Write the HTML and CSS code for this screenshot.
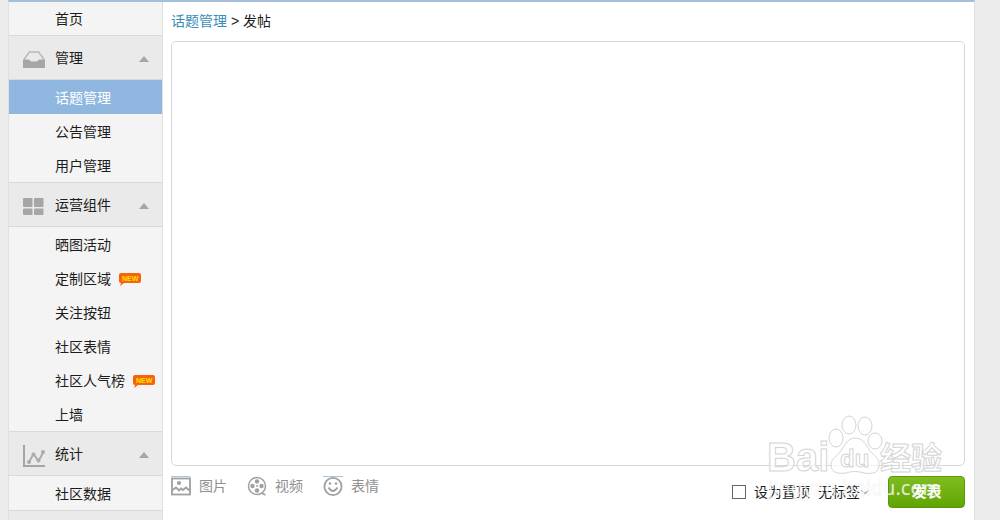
FILE: index.html
```html
<!DOCTYPE html>
<html lang="zh-CN">
<head>
<meta charset="utf-8">
<title>发帖</title>
<link rel="stylesheet" href="styles.css">
</head>
<body>
<div class="page">
  <nav class="sidebar">
    <a class="item home" href="#">首页</a>
    <button class="group" type="button">
      <svg class="group-icon" viewBox="0 0 22 22"><path d="M1.500 12V9.500L6.500 3h9L20.500 9.500V12" fill="none" stroke="#b8b8b8" stroke-width="1.500"/><path d="M0 10.500h5q2 0 3 2h6q1-2 3-2h5V19H0z" fill="#a6a6a6"/></svg>
      <span>管理</span><i class="arrow"></i>
    </button>
    <a class="item active" href="#">话题管理</a>
    <a class="item" href="#">公告管理</a>
    <a class="item" href="#">用户管理</a>
    <button class="group" type="button">
      <svg class="group-icon" viewBox="0 0 22 22" fill="#a6a6a6"><rect y="2" width="9.500" height="9" rx="1"/><rect x="11" y="2" width="9.500" height="9" rx="1"/><rect y="12.500" width="9.500" height="6.500" rx="1"/><rect x="11" y="12.500" width="9.500" height="6.500" rx="1"/></svg>
      <span>运营组件</span><i class="arrow"></i>
    </button>
    <a class="item" href="#">晒图活动</a>
    <a class="item" href="#">定制区域
      <svg class="new" viewBox="0 0 22 14"><path d="M2 1h18q2 0 2 2v6q0 2-2 2H5l-4 3 1-3q-2 0-2-2V3q0-2 2-2z" fill="#f8620c"/><text x="3" y="9">NEW</text></svg></a>
    <a class="item" href="#">关注按钮</a>
    <a class="item" href="#">社区表情</a>
    <a class="item" href="#">社区人气榜
      <svg class="new" viewBox="0 0 22 14"><path d="M2 1h18q2 0 2 2v6q0 2-2 2H5l-4 3 1-3q-2 0-2-2V3q0-2 2-2z" fill="#f8620c"/><text x="3" y="9">NEW</text></svg></a>
    <a class="item" href="#">上墙</a>
    <button class="group" type="button">
      <svg class="group-icon" viewBox="0 0 22 22"><path d="M1 0v21h21" fill="none" stroke="#a6a6a6" stroke-width="2"/><path d="M6 17l4.500-8 5 7 5-9" fill="none" stroke="#acacac" stroke-width="2"/><g fill="#acacac"><circle cx="6" cy="17" r="2"/><circle cx="10.500" cy="9.500" r="2"/><circle cx="15.500" cy="15.500" r="2"/><circle cx="20" cy="7" r="2"/></g></svg>
      <span>统计</span><i class="arrow"></i>
    </button>
    <a class="item" href="#">社区数据</a>
    <div class="sidebar-end"></div>
  </nav>
  <main class="content">
    <div class="crumbs"><a href="#">话题管理</a> &gt; 发帖</div>
    <textarea class="editor" aria-label="发帖内容"></textarea>
    <div class="footer">
      <div class="tools">
        <button type="button"><svg viewBox="0 0 20 20" fill="none" stroke="#a0a0a0" stroke-width="1.800"><path d="M0 .5h19.500" stroke="#abc5d9" stroke-width="1"/><rect x="1" y="2.500" width="18" height="16"/><path d="M1.500 14l3.500-2.500 3 3 2-2 2 1.500 3-2.500 3.500 3"/><circle cx="8" cy="7" r="1.200" fill="#a0a0a0"/></svg>图片</button>
        <button type="button"><svg viewBox="0 0 20 20" fill="none" stroke="#a0a0a0" stroke-width="1.500"><circle cx="10" cy="10" r="8.500"/><path d="M14.500 17l4 2"/><g fill="#a0a0a0" stroke="none"><circle cx="10" cy="5.500" r="2.200"/><circle cx="5.500" cy="10" r="2.200"/><circle cx="14.500" cy="10" r="2.200"/><circle cx="10" cy="14.500" r="2.200"/><circle cx="10" cy="10" r="1"/></g></svg>视频</button>
        <button type="button"><svg viewBox="0 0 20 20" fill="none" stroke="#a0a0a0" stroke-width="1.800"><path d="M0 .5h20" stroke="#abc5d9" stroke-width="1"/><circle cx="10" cy="10.500" r="8.600"/><path d="M5.500 11.500q4.500 7 9 0"/><g fill="#a0a0a0" stroke="none"><circle cx="7" cy="7.500" r="1.300"/><circle cx="13" cy="7.500" r="1.300"/></g></svg>表情</button>
      </div>
      <div class="submit">
        <label class="pin"><input type="checkbox">设为置顶</label>
        <div class="tag"><select aria-label="标签"><option>无标签</option></select><svg viewBox="0 0 10 6"><path d="M1 1l4 3.500L9 1" fill="none" stroke="#aaa" stroke-width="1.500"/></svg></div>
        <button class="post" type="button">发表</button>
      </div>
      <svg class="watermark" viewBox="0 0 184 90">
        <g fill="#fff" fill-opacity=".7" stroke="#d4d4d4" stroke-width="1">
          <ellipse cx="70" cy="24" rx="7" ry="9"/><ellipse cx="83" cy="11" rx="7" ry="9"/><ellipse cx="99" cy="12" rx="7" ry="9"/><ellipse cx="109" cy="27" rx="7" ry="8"/>
          <path d="M89 24c8 0 11 7 15 13 6 6 10 8 9 15-1 8-8 8-15 7-7-2-12-2-18 0-8 1-14 0-15-7-1-6 5-9 9-14s7-14 15-14z"/>
          <text class="logo" x="1" y="57">Bai</text>
          <text class="logo-du" x="74" y="53">du</text>
          <text class="logo-cn" x="114" y="55">经验</text>
        </g>
        <text class="site" x="2" y="81">jingyan.baidu.com</text>
      </svg>
    </div>
  </main>
</div>
</body>
</html>
```
FILE: styles.css
```css
* { box-sizing: border-box; }
body {
  margin: 0;
  background: #ebebeb;
  color: #1c1c1c;
  font: 14px/20px "Liberation Sans", "Noto Sans CJK SC", sans-serif;
}
button, select, textarea { font: inherit; }
a { text-decoration: none; }
button { cursor: pointer; }
.page {
  display: flex;
  min-height: 100vh;
  margin: 0 25px 0 8px;
  background: #fff;
  border: solid #e0e0e0;
  border-width: 0 1px;
  border-top: 2px solid #a6bfd9;
}
.sidebar {
  display: flex;
  flex-direction: column;
  flex: 0 0 154px;
  background: #f4f4f4;
  border-right: 1px solid #dfdfdf;
}
.item {
  display: flex;
  flex: none;
  align-items: center;
  gap: 8px;
  height: 34px;
  padding: 1px 0 0 46px;
  color: #1c1c1c;
}
.home { height: 33px; }
.active { background: #8fb7e0; color: #fff; }
.new { width: 22px; height: 14px; }
.new text { font: bold 7px "Liberation Sans", sans-serif; fill: #ffe100; }
.group {
  display: flex;
  flex: none;
  align-items: center;
  gap: 10px;
  height: 45px;
  padding: 0 13px 0 14px;
  background: #eaeaea;
  border: solid #d9d9d9;
  border-width: 1px 0;
  color: #1c1c1c;
  text-align: left;
}
.group span { flex: 1; }
.group-icon { width: 22px; height: 22px; margin-top: 4px; }
.arrow {
  margin-top: 2px;
  border: 5px solid transparent;
  border-top: 0;
  border-bottom: 6px solid #a6a6a6;
}
.sidebar-end { flex: 1; background: #eaeaea; border-top: 1px solid #d9d9d9; }
.content { flex: 1; min-width: 0; padding: 9px 9px 0 8px; }
.crumbs { height: 30px; white-space: pre; }
.crumbs a { color: #3a8db8; }
.editor {
  display: block;
  width: 100%;
  height: 425px;
  padding: 8px;
  background: #fff;
  border: 1px solid #d8d8d8;
  border-radius: 5px;
  outline: 0;
  resize: none;
}
.footer {
  position: relative;
  display: flex;
  justify-content: space-between;
  padding-top: 10px;
}
.tools { display: flex; align-items: flex-start; gap: 20px; }
.tools button {
  display: flex;
  align-items: center;
  gap: 8px;
  padding: 0;
  background: none;
  border: 0;
  color: #909090;
}
.tools svg { width: 20px; height: 20px; }
.submit { display: flex; align-items: center; }
.pin { display: flex; align-items: center; gap: 8px; }
.pin input {
  width: 14px;
  height: 14px;
  margin: 0;
  appearance: none;
  background: #fff;
  border: 1px solid #666;
}
.pin input:checked { background: #69a80e; }
.tag { display: flex; align-items: center; margin: 0 18px 0 8px; }
.tag select {
  padding: 0;
  appearance: none;
  background: none;
  border: 0;
  color: #1c1c1c;
}
.tag svg { width: 10px; height: 6px; }
.post {
  width: 77px;
  height: 32px;
  background: linear-gradient(#80bd20, #5fa502);
  border: 1px solid #5b990a;
  border-radius: 4px;
  color: #fff;
  font-size: 15px;
  font-weight: bold;
}
.watermark {
  position: absolute;
  right: 15px;
  bottom: 4px;
  width: 184px;
  height: 90px;
  pointer-events: none;
}
.logo { font: bold 40px "Liberation Sans", sans-serif; }
.logo-du { font: bold 24px "Liberation Sans", sans-serif; }
.logo-cn { font: bold 31px "Noto Sans CJK SC", sans-serif; }
.site {
  font: 20px "Noto Sans", sans-serif;
  fill: #fff;
  fill-opacity: .75;
  stroke: #bbb;
  stroke-opacity: .25;
  stroke-width: 1px;
  paint-order: stroke;
}
```
